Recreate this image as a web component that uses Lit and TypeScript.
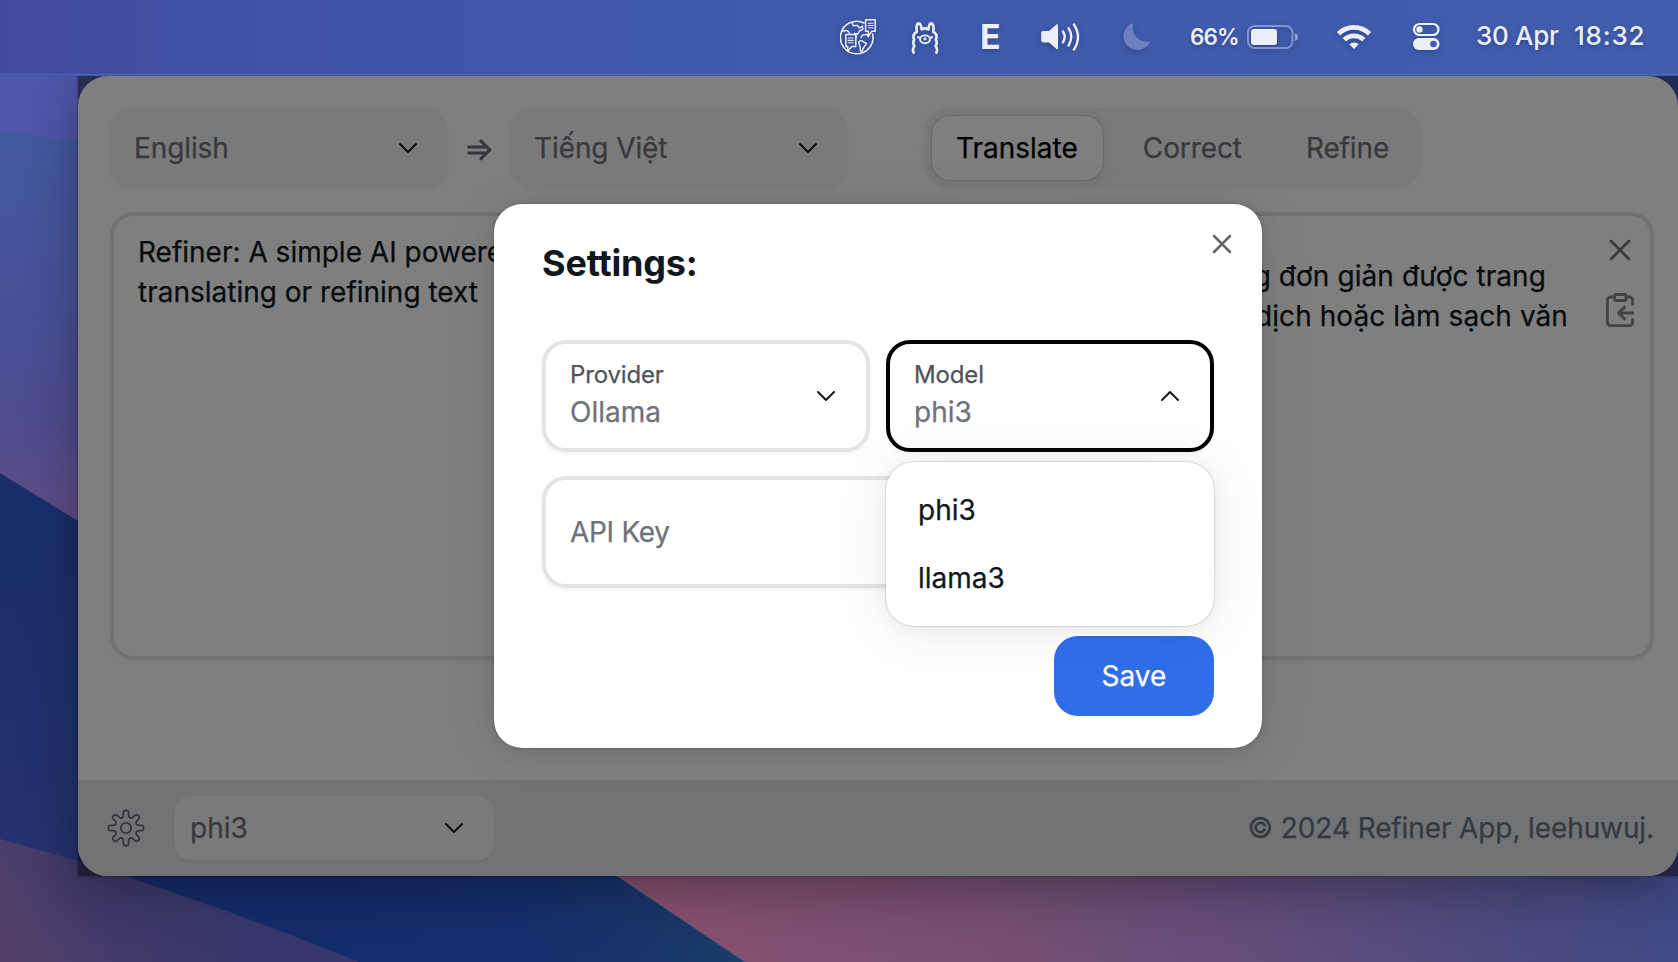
import { LitElement, html, css } from "lit";
import { customElement, property, state } from "lit/decorators.js";
import { classMap } from "lit/directives/class-map.js";

const FONT = css`Inter, "Noto Sans", sans-serif`;

/** Closed outline of an eight-tooth cog, softened by running curves through the midpoints. */
function cogPath(): string {
  const pts: [number, number][] = [];
  for (let k = 0; k < 8; k++) {
    const base = -90 + k * 45;
    const steps: [number, number][] = [
      [-18, 11],
      [-11, 13],
      [-9, 17.8],
      [9, 17.8],
      [11, 13],
      [18, 11],
    ];
    for (const [da, r] of steps) {
      const a = ((base + da) * Math.PI) / 180;
      pts.push([18 + r * Math.cos(a), 18 + r * Math.sin(a)]);
    }
  }
  const mid = (a: [number, number], b: [number, number]) =>
    `${((a[0] + b[0]) / 2).toFixed(2)} ${((a[1] + b[1]) / 2).toFixed(2)}`;
  const n = pts.length;
  let d = `M${mid(pts[n - 1], pts[0])}`;
  for (let i = 0; i < n; i++) {
    const p = pts[i];
    d += `Q${p[0].toFixed(2)} ${p[1].toFixed(2)} ${mid(p, pts[(i + 1) % n])}`;
  }
  return d + "Z";
}

@customElement("chevron-icon")
class ChevronIcon extends LitElement {
  @property({ type: Boolean }) up = false;
  static styles = css`
    :host { display: block; width: 32px; height: 32px; flex: none; color: #11181c; }
    svg { display: block; }
    .up { transform: rotate(180deg); }
  `;
  render() {
    return html`<svg class=${classMap({ up: this.up })} width="32" height="32" viewBox="0 0 24 24" fill="none"
      stroke="currentColor" stroke-width="1.5" stroke-linecap="round" stroke-linejoin="round"><path d="m6 9 6 6 6-6" /></svg>`;
  }
}

@customElement("desktop-wallpaper")
class DesktopWallpaper extends LitElement {
  static styles = css`
    :host { display: block; width: 1678px; height: 962px; }
    svg { display: block; }
  `;
  render() {
    return html`<svg width="1678" height="962" viewBox="0 0 1678 962">
      <defs>
        <linearGradient id="haze" x1="0" y1="130" x2="30" y2="520" gradientUnits="userSpaceOnUse">
          <stop offset="0" stop-color="#425a9f" />
          <stop offset=".45" stop-color="#485198" />
          <stop offset=".75" stop-color="#4f4c8f" />
          <stop offset="1" stop-color="#604d86" />
        </linearGradient>
        <linearGradient id="navy" x1="0" y1="480" x2="0" y2="870" gradientUnits="userSpaceOnUse">
          <stop offset="0" stop-color="#182e6b" />
          <stop offset="1" stop-color="#25326f" />
        </linearGradient>
        <linearGradient id="deep" x1="300" y1="0" x2="745" y2="0" gradientUnits="userSpaceOnUse">
          <stop offset="0" stop-color="#152c6b" />
          <stop offset=".5" stop-color="#152e6d" />
          <stop offset="1" stop-color="#1b3c68" />
        </linearGradient>
        <linearGradient id="plum" x1="0" y1="962" x2="200" y2="840" gradientUnits="userSpaceOnUse">
          <stop offset="0" stop-color="#533f67" />
          <stop offset=".5" stop-color="#423a6b" />
          <stop offset="1" stop-color="#36386d" />
        </linearGradient>
        <linearGradient id="rose" x1="690" y1="962" x2="1660" y2="760" gradientUnits="userSpaceOnUse">
          <stop offset="0" stop-color="#865170" />
          <stop offset=".3" stop-color="#765072" />
          <stop offset=".6" stop-color="#604d7b" />
          <stop offset=".85" stop-color="#494a80" />
          <stop offset="1" stop-color="#414987" />
        </linearGradient>
      </defs>
      <rect width="1678" height="962" fill="#5056a9" />
      <rect x="900" width="778" height="500" fill="#3f56a8" />
      <path d="M0 130L78 142L400 180V620H0Z" fill="url(#haze)" />
      <path d="M0 473L78 521L300 640V962H0Z" fill="url(#navy)" />
      <path d="M90 700H617V876L745 962H90Z" fill="url(#deep)" />
      <path d="M0 839L78 861Q150 884 215 907T359 962H0Z" fill="url(#plum)" />
      <path d="M560 838L617 876L745 962H1678V838Z" fill="url(#rose)" />
    </svg>`;
  }
}

@customElement("menu-bar")
class MenuBar extends LitElement {
  static styles = css`
    :host { display: block; }
    .bar {
      box-sizing: border-box; height: 76px; padding-left: 840px; display: flex; align-items: flex-start;
      color: #eceef8; font-family: ${FONT};
      background: linear-gradient(90deg, #434b9c 0, #4151a3 180px, #3f57a9 480px, #3f5aad 900px, #405dae 1678px);
      box-shadow: inset 0 -1px 0 #4059a8, inset 0 -2px 0 #4a65b6;
    }
    svg { display: block; flex: none; filter: drop-shadow(0 2px 3px rgba(0, 0, 30, 0.22)); }
    span { display: block; flex: none; text-shadow: 0 2px 4px rgba(0, 0, 30, 0.25); white-space: nowrap; }
    .llama { margin-left: 35px; }
    .input { margin-left: 41px; width: 22px; font-size: 34px; font-weight: 700; line-height: 74px; }
    .sound { margin-left: 38px; }
    .moon { margin-left: 41px; }
    .percent { margin-left: 39px; width: 48px; font-size: 22.5px; font-weight: 600; line-height: 74px; letter-spacing: -0.9px; }
    .battery { margin-left: 8px; }
    .wifi { margin-left: 37px; }
    .control { margin-left: 40px; }
    .date { margin-left: 36px; width: 98px; font-size: 26px; font-weight: 500; line-height: 72px; letter-spacing: -0.3px; }
    .time { font-size: 26px; font-weight: 500; line-height: 72px; letter-spacing: 0.8px; }
  `;
  render() {
    return html`<div class="bar">
      <svg width="36" height="76" viewBox="840 0 36 76" fill="none" stroke="currentColor" stroke-width="1.5" stroke-linejoin="round" stroke-linecap="round">
        <path d="M864 23A16.3 16.3 0 1 0 872.6 34" />
        <path d="M865.6 19.8h9.6v11.4h-3.4l-3.4 5.2v-5.2h-2.8z" />
        <path d="M868.4 23.2h4.6M868.4 25.5h4.6M868.4 27.8h4.6" stroke-width="1.1" />
        <path d="M845.8 34.4h10v12h-4l-4 5v-5h-2z" />
        <path d="M848.2 38h5M848.2 40.4h5M848.2 42.8h5" stroke-width="1.1" />
        <path d="M842.6 31.5q3-2 6 0l1.4 2.8M852 22.8l1.4 3 4-.4 2 2.6 3-2 .4 3.4-3.4 1.6-1.6 3-3.2-.6 2 3.4M861 37.6l1.6-2.6 4.4-.6 1.6 2.4M858.6 42q3-2.4 5.4.2l2.6 1.2-3 4.2-1.8 4-1.4-.4-.4-5z" stroke-width="1.4" />
      </svg>
      <svg class="llama" width="28" height="76" viewBox="911 0 28 76" fill="none" stroke="currentColor" stroke-width="2.6" stroke-linecap="round" stroke-linejoin="round">
        <path d="M913.6 52.600q-1.600-3.600.8-6.600-2.200-3-.2-6.200-2.400-5.600 2.600-8-1.200-7.800 2-8.400 2.200 0 2.800 6 3.400-2 6.800 0 .6-6 2.800-6 3.200.6 2 8.400 5 2.400 2.600 8 2 3.200-.2 6.200 2.400 3 .8 6.600" />
        <ellipse cx="925" cy="39.300" rx="5" ry="3.900" stroke-width="1.900" />
        <circle cx="925" cy="38.800" r="1" stroke-width="1.200" />
        <path d="M918.200 37.200h.2M931.600 37.200h.2" stroke-width="2.500" />
      </svg>
      <span class="input">E</span>
      <svg class="sound" width="41" height="76" viewBox="1040 0 41 76" fill="none" stroke="currentColor" stroke-width="2.400" stroke-linecap="round">
        <path d="M1043.500 31h5.500l7.500-6.400q1.500-1 1.500.8v22.800q0 1.800-1.500.8L1049 42.600h-5.500q-2.300 0-2.300-2.300v-7q0-2.300 2.300-2.300z" fill="currentColor" stroke="none" />
        <path d="M1063 31.500q3.400 5.300 0 10.800M1068.500 28.200q5.600 8.600 0 17.400M1074 24.600q8 12.300 0 24.800" />
      </svg>
      <svg class="moon" width="29" height="76" viewBox="1122 0 29 76">
        <path d="M1133.500 23a13.800 13.800 0 1 0 16.600 18.400 14.200 14.200 0 0 1-16.600-18.400z" fill="#6d80c1" />
      </svg>
      <span class="percent">66%</span>
      <svg class="battery" width="53" height="76" viewBox="1246 0 53 76">
        <rect x="1248" y="26" width="44.500" height="22" rx="6.500" fill="none" stroke="#8594cd" stroke-width="2" />
        <rect x="1251" y="29" width="26" height="16" rx="3" fill="currentColor" />
        <path d="M1295 33q3 1 3 4t-3 4z" fill="#94a2d4" />
      </svg>
      <svg class="wifi" width="36" height="76" viewBox="1336 0 36 76" fill="none" stroke="currentColor" stroke-width="4.800">
        <path d="M1338.500 33.800a22 22 0 0 1 31 0" />
        <path d="M1344.300 39.800a14 14 0 0 1 19.400 0" />
        <path d="M1349.300 44.200a7 7 0 0 1 9.400 0L1354 49z" fill="currentColor" stroke="none" />
      </svg>
      <svg class="control" width="28" height="76" viewBox="1412 0 28 76">
        <rect x="1414" y="24" width="24.500" height="11" rx="5.500" fill="none" stroke="currentColor" stroke-width="2.200" />
        <circle cx="1419.500" cy="29.500" r="3.200" fill="currentColor" />
        <rect x="1413" y="38" width="26.500" height="12" rx="6" fill="currentColor" />
        <circle cx="1433.500" cy="44" r="3.300" fill="#405cae" />
      </svg>
      <span class="date">30 Apr</span>
      <span class="time">18:32</span>
    </div>`;
  }
}

@customElement("settings-dialog")
class SettingsDialog extends LitElement {
  @state() private models = ["phi3", "llama3"];
  static styles = css`
    :host { display: block; }
    .dialog {
      box-sizing: border-box; width: 768px; height: 544px; padding: 31px 48px 32px; border-radius: 28px; background: #fff;
      display: flex; flex-direction: column; font-family: ${FONT}; color: #11181c; position: relative;
      -webkit-text-stroke: 0.25px currentColor;
      box-shadow: 0 0 2px rgba(0, 0, 0, 0.35), 0 4px 60px rgba(0, 0, 0, 0.06), 0 2px 20px rgba(0, 0, 0, 0.1);
    }
    h1 { margin: 0; font-size: 36px; font-weight: 700; line-height: 56px; letter-spacing: -0.18px; -webkit-text-stroke: 0; }
    .close { position: absolute; top: 24px; right: 24px; width: 32px; height: 32px; color: #66666f; }
    .close svg { display: block; }
    .fields { margin-top: 49px; display: grid; grid-template-columns: 1fr 1fr; column-gap: 16px; row-gap: 24px; }
    .field {
      box-sizing: border-box; height: 112px; border: 4px solid #e4e4e7; border-radius: 24px; padding: 0 24px;
      display: flex; align-items: center; justify-content: space-between; position: relative;
      box-shadow: 0 2px 4px rgba(0, 0, 0, 0.05);
    }
    .field.open { border-color: #000; }
    .wide { grid-column: 1 / 3; letter-spacing: -0.3px; }
    .text { display: flex; flex-direction: column; padding-bottom: 2px; }
    .label { font-size: 24px; line-height: 34px; color: #52525b; letter-spacing: -0.15px; }
    .value { font-size: 28px; line-height: 40px; color: #71717a; }
    .list {
      position: absolute; z-index: 2; top: 118px; left: -4px; width: 328px; box-sizing: border-box; padding: 16px;
      display: flex; flex-direction: column; gap: 4px; background: #fff; border-radius: 28px;
      box-shadow: 0 0 2px rgba(0, 0, 0, 0.32), 0 4px 60px rgba(0, 0, 0, 0.07), 0 2px 20px rgba(0, 0, 0, 0.06);
    }
    .option { height: 64px; line-height: 64px; padding: 0 16px; font-size: 28px; }
    .actions { margin-top: 48px; display: flex; justify-content: flex-end; }
    .save {
      width: 160px; height: 80px; border-radius: 24px; background: #2f6de9; color: #fff; font-size: 28px;
      line-height: 80px; text-align: center;
    }
  `;
  render() {
    return html`<section class="dialog">
      <h1>Settings:</h1>
      <div class="close"><svg width="32" height="32" viewBox="0 0 24 24" fill="none" stroke="currentColor" stroke-width="1.900" stroke-linecap="round"><path d="M18 6L6 18M6 6l12 12" /></svg></div>
      <div class="fields">
        <div class="field">
          <div class="text"><span class="label">Provider</span><span class="value">Ollama</span></div>
          <chevron-icon></chevron-icon>
        </div>
        <div class="field open">
          <div class="text"><span class="label">Model</span><span class="value">phi3</span></div>
          <chevron-icon up></chevron-icon>
          <div class="list">${this.models.map((m) => html`<div class="option">${m}</div>`)}</div>
        </div>
        <div class="field wide"><span class="value">API Key</span></div>
      </div>
      <div class="actions"><div class="save">Save</div></div>
    </section>`;
  }
}

@customElement("refiner-window")
class RefinerWindow extends LitElement {
  @state() private mode = "Translate";
  static styles = css`
    :host { display: block; }
    .frame { position: relative; width: 1600px; height: 800px; box-shadow: 0 0 2px rgba(0, 0, 0, 0.5), 0 14px 50px rgba(0, 0, 0, 0.33); }
    .page {
      height: 800px; border-radius: 30px; overflow: hidden; background: #fff; display: flex; flex-direction: column;
      font-family: ${FONT}; font-size: 28px; color: #71717a; -webkit-text-stroke: 0.25px currentColor;
    }
    .head { padding: 32px 32px 0; display: flex; align-items: center; }
    .select {
      box-sizing: border-box; height: 80px; width: 338px; padding: 0 24px; border-radius: 24px; background: #f4f4f5;
      display: flex; align-items: center; justify-content: space-between; box-shadow: 0 2px 4px rgba(0, 0, 0, 0.05);
      letter-spacing: -0.1px;
    }
    .arrow { display: block; margin: 0 18px; }
    .tabs {
      margin-left: 76px; box-sizing: border-box; height: 80px; width: 498px; padding: 8px; border-radius: 24px;
      background: #f4f4f5; display: flex; gap: 16px;
    }
    .tab { padding: 0 24px; line-height: 64px; border-radius: 18px; letter-spacing: -0.1px; }
    .tab.active { padding-right: 25px; letter-spacing: 0; background: #fff; color: #000; box-shadow: 0 0 2px rgba(0, 0, 0, 0.35), 0 2px 20px rgba(0, 0, 0, 0.08); }
    .panes { margin: 24px 24px 0 32px; display: grid; grid-template-columns: 1fr 1fr; column-gap: 16px; }
    .pane {
      box-sizing: border-box; height: 448px; border: 4px solid #e4e4e7; border-radius: 24px; padding: 16px 24px;
      color: #11181c; line-height: 40px; box-shadow: 0 2px 4px rgba(0, 0, 0, 0.05); white-space: nowrap; display: flex;
      justify-content: space-between;
    }
    .result { padding: 0 14px 0 24px; }
    .lines { padding-top: 40px; width: 650px; text-align: right; letter-spacing: 0.08px; }
    .first { padding-right: 22px; }
    .tools { flex: none; width: 32px; padding-top: 22px; display: flex; flex-direction: column; gap: 30px; align-items: center; color: #71717a; }
    .tools svg { display: block; }
    .foot {
      margin-top: auto; height: 96px; background: #e5e7eb; display: flex; align-items: center; padding: 0 24px 0 30px;
    }
    .cog { display: block; color: #6b6c76; overflow: visible; }
    .model {
      box-sizing: border-box; margin-left: 30px; width: 320px; height: 64px; padding: 0 24px 0 16px; border-radius: 16px;
      background: #f4f4f5; display: flex; align-items: center; justify-content: space-between; box-shadow: 0 2px 4px rgba(0, 0, 0, 0.05);
    }
    .credit { margin-left: auto; color: #6b7280; letter-spacing: -0.11px; }
    .scrim { position: absolute; inset: 0; background: rgba(0, 0, 0, 0.5); }
    .modal { position: absolute; top: 128px; left: 416px; }
  `;
  render() {
    return html`<div class="frame">
      <div class="page">
        <div class="head">
          <div class="select"><span>English</span><chevron-icon></chevron-icon></div>
          <svg class="arrow" width="26" height="26" viewBox="0 0 26 26" fill="none" stroke="#6b6c7a" stroke-width="3.100" stroke-linejoin="round">
            <path d="M1.500 12h20M1.500 18h20M14 5.200l9.800 9.700L14 24.600" />
          </svg>
          <div class="select"><span>Tiếng Việt</span><chevron-icon></chevron-icon></div>
          <div class="tabs">
            ${["Translate", "Correct", "Refine"].map(
              (t) => html`<div class=${classMap({ tab: true, active: t === this.mode })}>${t}</div>`,
            )}
          </div>
        </div>
        <div class="panes">
          <div class="pane"><div>Refiner: A simple AI powered<br />translating or refining text</div></div>
          <div class="pane result">
            <div class="lines"><div class="first">ứng dụng đơn giản được trang</div><div>dịch hoặc làm sạch văn</div></div>
            <div class="tools">
              <svg width="24" height="24" viewBox="0 0 24 24" fill="none" stroke="currentColor" stroke-width="2.700" stroke-linecap="round"><path d="M3 3l18 18M21 3L3 21" /></svg>
              <svg width="30" height="36" viewBox="1605 292 30 36" fill="none" stroke="#83868f" stroke-width="2.900" stroke-linejoin="round">
                <rect x="1614.500" y="294.500" width="11.500" height="6" rx="1.800" />
                <path d="M1614 297h-3.200a3.400 3.400 0 0 0-3.400 3.400v21.800a3.400 3.400 0 0 0 3.400 3.400h18.600a3.200 3.200 0 0 0 3.200-3.200v-4.200M1626.500 297h2.700a3.400 3.400 0 0 1 3.400 3.400v5M1634 313h-15.500M1625.500 306.200l-7 6.800 7 6.800" />
              </svg>
            </div>
          </div>
        </div>
        <div class="foot">
          <svg class="cog" width="36" height="36" viewBox="0 0 36 36" fill="none" stroke="currentColor" stroke-width="1.800">
            <path d=${cogPath()} /><circle cx="18" cy="18" r="5.200" />
          </svg>
          <div class="model"><span>phi3</span><chevron-icon></chevron-icon></div>
          <div class="credit">© 2024 Refiner App, leehuwuj.</div>
        </div>
      </div>
      <div class="scrim"></div>
      <settings-dialog class="modal"></settings-dialog>
    </div>`;
  }
}

@customElement("app-root")
class AppRoot extends LitElement {
  static styles = css`
    :host { display: block; position: relative; width: 1678px; height: 962px; overflow: hidden; }
    .wall { position: absolute; inset: 0; }
    .desk { position: relative; }
    .win { margin-left: 78px; }
    .bar { position: relative; z-index: 1; }
  `;
  render() {
    return html`<desktop-wallpaper class="wall"></desktop-wallpaper>
      <div class="desk">
        <menu-bar class="bar"></menu-bar>
        <refiner-window class="win"></refiner-window>
      </div>`;
  }
}
